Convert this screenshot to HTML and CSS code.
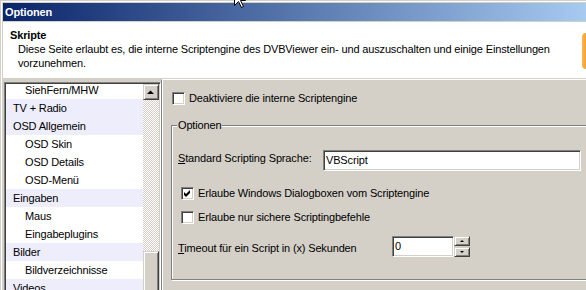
FILE: index.html
```html
<!DOCTYPE html>
<html>
<head>
  <meta charset="utf-8">
  <link rel="stylesheet" href="styles.css">
</head>
<body>
  <div class="window">
    <div class="titlebar">Optionen</div>
    <div class="header">
      <div class="header-text">
        <div class="header-title">Skripte</div>
        <div class="header-desc">Diese Seite erlaubt es, die interne Scriptengine des DVBViewer ein- und auszuschalten und einige Einstellungen<br>vorzunehmen.</div>
      </div>
      <div class="header-logo"></div>
    </div>

    <div class="main">
      <div class="tree">
        <ul class="tree-list">
          <li class="tree-item child">SiehFern/MHW</li>
          <li class="tree-item group">TV + Radio</li>
          <li class="tree-item group">OSD Allgemein</li>
          <li class="tree-item child">OSD Skin</li>
          <li class="tree-item child">OSD Details</li>
          <li class="tree-item child">OSD-Menü</li>
          <li class="tree-item group">Eingaben</li>
          <li class="tree-item child">Maus</li>
          <li class="tree-item child">Eingabeplugins</li>
          <li class="tree-item group">Bilder</li>
          <li class="tree-item child">Bildverzeichnisse</li>
          <li class="tree-item group">Videos</li>
        </ul>
        <div class="scrollbar">
          <div class="raised scroll-btn">
            <svg width="14" height="14" viewBox="0 0 14 14"><polygon points="3,9 10,9 6.5,5.5" fill="#000"/></svg>
          </div>
          <div class="scroll-track"></div>
          <div class="raised scroll-thumb"></div>
        </div>
      </div>

      <div class="page">
        <label class="check-row top-check">
          <span class="checkbox"></span>
          Deaktiviere die interne Scriptengine
        </label>

        <fieldset class="group-box">
          <legend>Optionen</legend>
          <div class="field-row">
            <span class="field-label lang-label"><u>S</u>tandard Scripting Sprache:</span>
            <div class="edit lang-edit">VBScript</div>
          </div>
          <label class="check-row group-check first">
            <span class="checkbox">
              <svg width="11" height="11" viewBox="0 0 11 11"><polygon points="2,4 4,6 8,2 8,5 4,9 2,7" fill="#000"/></svg>
            </span>
            Erlaube Windows Dialogboxen vom Scriptengine
          </label>
          <label class="check-row group-check">
            <span class="checkbox"></span>
            Erlaube nur sichere Scriptingbefehle
          </label>
          <div class="field-row timeout-row">
            <span class="field-label timeout-label"><u>T</u>imeout für ein Script in (x) Sekunden</span>
            <div class="edit spin-edit">0</div>
            <div class="spin-buttons">
              <div class="raised spin-btn">
                <svg width="14" height="8" viewBox="0 0 14 8"><polygon points="5,5 9,5 7,3" fill="#000"/></svg>
              </div>
              <div class="raised spin-btn">
                <svg width="14" height="8" viewBox="0 0 14 8"><polygon points="5,3 9,3 7,5" fill="#000"/></svg>
              </div>
            </div>
          </div>
        </fieldset>
      </div>
    </div>
  </div>

  <svg class="cursor" width="13" height="20" viewBox="0 0 13 20">
    <polygon points="0.5,0.5 0.5,16.5 4.5,12.5 7.5,18.5 9.5,17.5 6.5,11.5 11.5,11.5" fill="#fff" stroke="#000" stroke-width="1"/>
  </svg>
</body>
</html>
```

FILE: styles.css
```css
body {
  margin: 0;
  background: #D4D0C8;
  font-family: "Liberation Sans", Arial, sans-serif;
  font-size: 11px;
  line-height: 13px;
  letter-spacing: -0.15px;
  color: #000;
  overflow: hidden;
}
.window {
  width: 583px;
  height: 287px;
  margin: 1px 0 0 1px;
  padding: 1px 0 0 1px;
  border-top: 1px solid #fff;
  border-left: 1px solid #fff;
  overflow: hidden;
}
.titlebar {
  height: 18px;
  line-height: 18px;
  padding-left: 2px;
  color: #fff;
  font-weight: bold;
  background: linear-gradient(to right, #0A246A, #A6CAF0);
}
.header {
  display: flex;
  height: 56px;
  margin-top: 1px;
  padding: 7px 0 0 7px;
  box-sizing: border-box;
  background: #fff;
}
.header-text {
  flex: 1;
}
.header-title {
  font-weight: bold;
}
.header-desc {
  margin-left: 8px;
  line-height: 14px;
}
.header-logo {
  width: 20px;
  height: 36px;
  margin: 4px -16px 0 0;
  border-radius: 4px;
  background: linear-gradient(to right, #F9B850, #F28418 40%, #EE7A10);
}

.main {
  display: flex;
  align-items: flex-start;
}

/* tree list on the left */
.tree {
  display: flex;
  width: 157px;
  height: 215px;
  margin: 4px 0 0 1px;
  box-sizing: border-box;
  border: 1px solid;
  border-color: #808080 #fff #fff #808080;
  box-shadow: inset 1px 1px #404040, inset -1px -1px #D4D0C8;
  padding: 1px;
  background: #fff;
}
.tree-list {
  flex: 1;
  list-style: none;
  margin: 0;
  padding: 0;
  overflow: hidden;
}
.tree-list .tree-item:first-child {
  margin-top: -3px;
}
.tree-item {
  height: 18px;
  line-height: 18px;
  white-space: nowrap;
}
.tree-item.group {
  padding-left: 7px;
  background: #EDEDFB;
}
.tree-item.child {
  padding-left: 19px;
}
.scrollbar {
  display: flex;
  flex-direction: column;
  width: 16px;
}
.raised {
  box-sizing: border-box;
  background: #D4D0C8;
  border: 1px solid;
  border-color: #D4D0C8 #404040 #404040 #D4D0C8;
  box-shadow: inset 1px 1px #fff, inset -1px -1px #808080;
}
.scroll-btn {
  height: 16px;
}
.scroll-btn svg {
  display: block;
}
.scroll-track {
  height: 151px;
  background: repeating-conic-gradient(#fff 0 25%, #D4D0C8 0 50%) 0 0 / 2px 2px;
}
.scroll-thumb {
  flex: 1;
}

/* settings page */
.page {
  flex: 1;
  height: 220px;
  margin-top: 1px;
  padding: 12px 0 0 9px;
  border-top: 1px solid #fff;
  border-left: 1px solid #808080;
  box-shadow: inset 1px 0 #fff;
}
.check-row {
  display: flex;
  align-items: center;
  gap: 4px;
  height: 13px;
  white-space: nowrap;
}
.checkbox {
  width: 13px;
  height: 13px;
  flex: none;
  box-sizing: border-box;
  border: 1px solid;
  border-color: #808080 #fff #fff #808080;
  box-shadow: inset 1px 1px #404040, inset -1px -1px #D4D0C8;
  background: #fff;
}
.checkbox svg {
  display: block;
}
.top-check {
  margin-left: 1px;
}
.group-box {
  margin: 14px -12px 0 0;
  padding: 0 0 22px 5px;
  border: 1px solid #808080;
  box-shadow: inset 1px 1px #fff, 1px 1px #fff;
}
.group-box legend {
  padding: 0 1px;
  background: #D4D0C8;
}
.field-row {
  display: flex;
  align-items: flex-start;
  margin-top: 18px;
}
.field-label {
  box-sizing: border-box;
  padding-left: 1px;
  white-space: nowrap;
}
.lang-label {
  width: 146px;
  margin-top: 2px;
}
.edit {
  box-sizing: border-box;
  height: 21px;
  line-height: 19px;
  padding-left: 2px;
  border: 1px solid;
  border-color: #808080 #fff #fff #808080;
  box-shadow: inset 1px 1px #404040, inset -1px -1px #D4D0C8;
  background: #fff;
}
.lang-edit {
  width: 258px;
}
.group-check {
  margin-left: 4px;
  margin-top: 11px;
}
.group-check.first {
  margin-top: 16px;
}
.timeout-row {
  margin-top: 12px;
}
.timeout-label {
  width: 215px;
  margin-top: 6px;
}
.spin-edit {
  width: 62px;
}
.spin-buttons {
  display: flex;
  flex-direction: column;
  gap: 1px;
  height: 21px;
}
.spin-btn {
  width: 16px;
  height: 10px;
}
.spin-btn svg {
  display: block;
}

.cursor {
  position: absolute;
  left: 234px;
  top: -11px;
}
```
